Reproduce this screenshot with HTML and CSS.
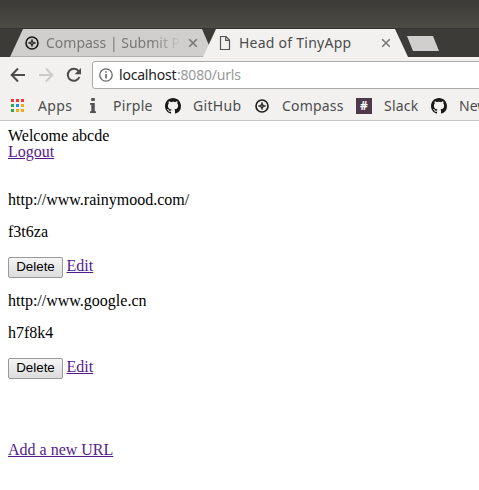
FILE: index.html
```html
<!DOCTYPE html>
<html lang="en">
<head>
<meta charset="utf-8">
<title>Head of TinyApp</title>
<link rel="stylesheet" href="styles.css">
</head>
<body>
<svg class="defs" width="0" height="0">
  <symbol id="compass" viewBox="0 0 16 16"><circle cx="8" cy="8" r="6" fill="none" stroke="currentColor" stroke-width="1.6"/><path d="M8 4 9.1 6.9 12 8 9.1 9.1 8 12 6.9 9.1 4 8 6.9 6.9Z" fill="currentColor" stroke="currentColor" stroke-width=".4"/><circle cx="8" cy="8" r=".7" fill="#ddd"/></symbol>
  <symbol id="github" viewBox="0 0 16 16"><path fill="currentColor" d="M8 0C3.58 0 0 3.58 0 8c0 3.54 2.29 6.53 5.47 7.59.4.07.55-.17.55-.38 0-.19-.01-.82-.01-1.49-2.01.37-2.53-.49-2.69-.94-.09-.23-.48-.94-.82-1.13-.28-.15-.68-.52-.01-.53.63-.01 1.08.58 1.23.82.72 1.21 1.87.87 2.33.66.07-.52.28-.87.51-1.07-1.78-.2-3.64-.89-3.64-3.95 0-.87.31-1.59.82-2.15-.08-.2-.36-1.02.08-2.12 0 0 .67-.21 2.2.82.64-.18 1.32-.27 2-.27s1.36.09 2 .27c1.53-1.04 2.2-.82 2.2-.82.44 1.1.16 1.92.08 2.12.51.56.82 1.27.82 2.15 0 3.07-1.87 3.75-3.65 3.95.29.25.54.73.54 1.48 0 1.07-.01 1.93-.01 2.2 0 .21.15.46.55.38A8.01 8.01 0 0 0 16 8c0-4.42-3.58-8-8-8z"/></symbol>
  <symbol id="close" viewBox="0 0 10 10"><path d="M1.2 1.2 8.8 8.8M8.8 1.2 1.2 8.8" stroke="currentColor" stroke-width="1.6"/></symbol>
</svg>
<header>
  <div class="titlebar"></div>
  <div class="tabs">
    <div class="tab inactive">
      <svg class="icon black"><use href="#compass"/></svg>
      <span class="title fade">Compass | Submit P</span>
      <svg class="close"><use href="#close"/></svg>
    </div>
    <div class="tab active">
      <svg class="page" viewBox="0 0 12 16"><path d="M1.5 1.5H7L10.5 5V14.5H1.5ZM6.7 1.5V5.3H10.5" fill="none" stroke="#555" stroke-width="1.2"/></svg>
      <span class="title">Head of TinyApp</span>
      <svg class="close"><use href="#close"/></svg>
    </div>
    <div class="newtab"></div>
  </div>
  <div class="toolbar">
    <svg class="nav" viewBox="0 0 92 32"><g fill="none" stroke-width="2"><path d="M25 18H12M18 11.5 11.7 18 18 24.5" stroke="#4c4c4c"/><path d="M39 18H52M46 11.5 52.3 18 46 24.5" stroke="#cbcbcb"/><path d="M78.6 14.2A6 6 0 1 0 79.4 20" stroke="#4c4c4c"/></g><path d="M81 11V17.2H74.6Z" fill="#4c4c4c"/></svg>
    <div class="omnibox">
      <svg class="info" viewBox="0 0 14 14"><circle cx="7" cy="7" r="6.2" fill="none" stroke="#666" stroke-width="1.3"/><path d="M7 6V10.5M7 3.2V4.8" stroke="#666" stroke-width="1.6"/></svg>
      <span class="host">localhost</span><span class="path">:8080/urls</span>
    </div>
  </div>
  <nav class="bookmarks">
    <div class="bm apps"><svg class="grid" viewBox="0 0 13 13"><path fill="#ee3a35" d="M0 0h3v3H0zM5 0h3v3H5zM10 0h3v3h-3z"/><path fill="#35a256" d="M0 5h3v3H0zM0 10h3v3H0z"/><path fill="#1a8cf0" d="M5 5h3v3H5z"/><path fill="#f5ab10" d="M10 5h3v3h-3zM5 10h3v3H5zM10 10h3v3h-3z"/></svg><span>Apps</span></div>
    <div class="bm pirple"><svg class="letter" viewBox="0 0 16 16"><path fill="#555" d="M6.2 0h3.6v3.1H6.2zM5 5h4.8v8.2H11V15H5v-1.8h1.3V6.8H5z"/></svg><span>Pirple</span></div>
    <div class="bm gh"><svg class="icon"><use href="#github"/></svg><span>GitHub</span></div>
    <div class="bm comp"><svg class="icon"><use href="#compass"/></svg><span>Compass</span></div>
    <div class="bm slack"><b class="hash">#</b><span>Slack</span></div>
    <div class="bm new"><svg class="icon"><use href="#github"/></svg><span>New</span></div>
  </nav>
</header>
<main>
  <div class="welcome">Welcome abcde<br><a>Logout</a></div>
  <section><p>http://www.rainymood.com/</p><p>f3t6za</p><div class="actions"><button>Delete</button><a>Edit</a></div></section>
  <section><p>http://www.google.cn</p><p>h7f8k4</p><div class="actions"><button>Delete</button><a>Edit</a></div></section>
  <a class="add">Add a new URL</a>
</main>
</body>
</html>
```
FILE: styles.css
```css
* { box-sizing: border-box; }
body { margin: 0; background: #fff; overflow: hidden; height: 490px; }
svg { display: block; flex: none; }
.defs { position: absolute; }
header { height: 121px; width: 479px; overflow: hidden; background: #f2f1f0; border-bottom: 1px solid #c8c8c8; font: 14px/20px "Noto Sans", sans-serif; color: #4c4c4c; white-space: nowrap; }
.titlebar { height: 28px; background: linear-gradient(#3c3b37, #4c4b44); }
.tabs { height: 29px; display: flex; background: #3c3b37; padding-left: 10px; border-top: 1px solid #35342f; }
.tab { height: 28px; display: flex; align-items: center; flex: none; }
.inactive { width: 204px; padding-left: 14px; background: linear-gradient(#d0cfce 27px, #b0b0b0 27px); clip-path: polygon(13px 0, 192px 0, 204px 28px, 0 28px); color: #777; }
.active { width: 205px; margin-left: -11px; padding-left: 16px; background: #f2f1f0; clip-path: polygon(13px 0, 192px 0, 205px 28px, 0 28px); }
.icon { width: 16px; height: 16px; color: #191919; }
.title { margin-left: 6px; width: 136px; overflow: hidden; letter-spacing: .25px; }
.fade { letter-spacing: 0; -webkit-mask-image: linear-gradient(90deg, #000 105px, transparent 136px); mask-image: linear-gradient(90deg, #000 105px, transparent 136px); }
.close { width: 10px; height: 10px; margin-left: 6px; color: #777; }
.page { width: 12px; height: 16px; }
.active .title { margin-left: 8px; width: 134px; }
.active .close { margin-left: 8px; }
.newtab { width: 32px; height: 15px; margin: 7px 0 0 -1px; background: #d0cfce; clip-path: polygon(0 0, 26px 0, 32px 15px, 6px 15px); }
.toolbar { height: 32px; display: flex; }
.nav { width: 92px; height: 32px; }
.omnibox { flex: none; width: 400px; height: 28px; margin-top: 4px; border: 1px solid #aaa; border-radius: 3px; background: #fff; display: flex; align-items: center; padding-left: 6px; }
.info { width: 14px; height: 14px; }
.host { margin-left: 6px; width: 58px; color: #222; letter-spacing: -.2px; }
.path { color: #999; letter-spacing: -.2px; }
.bookmarks { height: 31px; display: flex; align-items: center; padding: 2px 0 0 9px; }
.bm { display: flex; align-items: center; flex: none; gap: 12px; }
.apps { width: 76px; gap: 14px; padding-left: 2px; letter-spacing: .4px; }
.grid { width: 13px; height: 13px; }
.pirple { width: 80px; letter-spacing: .3px; }
.letter { width: 16px; height: 16px; }
.gh { width: 89px; letter-spacing: .3px; }
.comp { width: 102px; letter-spacing: .2px; }
.slack { width: 75px; letter-spacing: .2px; }
.hash { width: 16px; height: 16px; background: #4d394b; color: #fff; font-size: 12px; line-height: 16px; text-align: center; }
main { padding: 7px 8px 8px; font: 16px/16px "Liberation Serif", serif; color: #000; }
a { color: #551a8b; text-decoration: underline; }
.welcome { height: 64px; }
section { height: 101px; }
p { margin: 0 0 16px; }
.actions { display: flex; align-items: flex-start; gap: 4px; padding-top: 1px; }
.actions a { margin: 1px 0 0 -.5px; }
button { width: 55px; height: 21px; margin: 0; padding: 0 0 2px; border: 1px solid #999; border-radius: 2px; background: linear-gradient(#f5f5f5, #dcdcdc); font: 13.33px/15px "Liberation Sans", sans-serif; color: #000; }
.add { display: block; margin-top: 48px; }
```
